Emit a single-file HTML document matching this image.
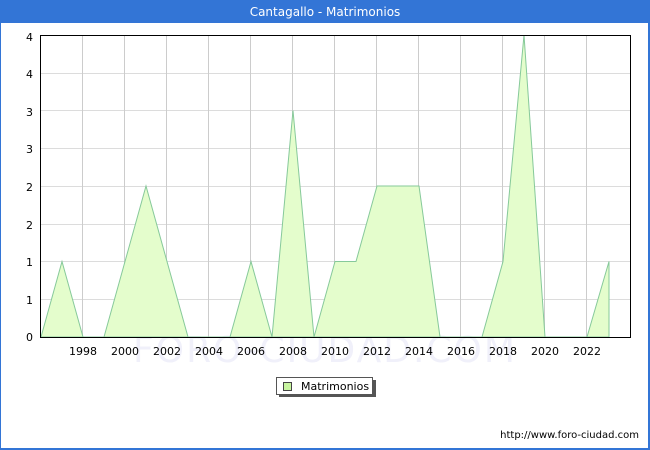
<!DOCTYPE html>
<html><head><meta charset="utf-8"><style>
body{margin:0;width:650px;height:450px;overflow:hidden;background:#fff;font-family:"DejaVu Sans","Liberation Sans",sans-serif}
</style></head><body>
<svg width="650" height="450" xmlns="http://www.w3.org/2000/svg" style="position:absolute;left:0;top:0">
<rect x="0" y="0" width="650" height="450" fill="#3375d6"/>
<rect x="1" y="23" width="647" height="425" fill="#fff"/>
<text x="325" y="16" fill="#fff" font-size="12" text-anchor="middle" font-family="DejaVu Sans,sans-serif">Cantagallo - Matrimonios</text>
<text x="325" y="362" fill="#f0f0fa" font-size="36" text-anchor="middle" font-family="DejaVu Sans,sans-serif" letter-spacing="2">FORO-CIUDAD.COM</text>
<g stroke="#dcdcdc" stroke-width="1">
<line x1="41" y1="73.5" x2="630" y2="73.5"/><line x1="41" y1="110.5" x2="630" y2="110.5"/>
<line x1="41" y1="148.5" x2="630" y2="148.5"/><line x1="41" y1="186.5" x2="630" y2="186.5"/>
<line x1="41" y1="224.5" x2="630" y2="224.5"/><line x1="41" y1="261.5" x2="630" y2="261.5"/>
<line x1="41" y1="299.5" x2="630" y2="299.5"/>
</g>
<g stroke="#cccccc" stroke-width="1">
<line x1="82.5" y1="35" x2="82.5" y2="337"/><line x1="124.5" y1="35" x2="124.5" y2="337"/>
<line x1="166.5" y1="35" x2="166.5" y2="337"/><line x1="208.5" y1="35" x2="208.5" y2="337"/>
<line x1="250.5" y1="35" x2="250.5" y2="337"/><line x1="292.5" y1="35" x2="292.5" y2="337"/>
<line x1="334.5" y1="35" x2="334.5" y2="337"/><line x1="376.5" y1="35" x2="376.5" y2="337"/>
<line x1="418.5" y1="35" x2="418.5" y2="337"/><line x1="460.5" y1="35" x2="460.5" y2="337"/>
<line x1="502.5" y1="35" x2="502.5" y2="337"/><line x1="544.5" y1="35" x2="544.5" y2="337"/>
<line x1="586.5" y1="35" x2="586.5" y2="337"/>
</g>
<polygon fill="#e4fdcc" stroke="#86c99a" stroke-width="1" points="41,337 62,261.5 83,337 104,337 125,261.5 146,186 167,261.5 188,337 209,337 230,337 251,261.5 272,337 293,110.5 314,337 335,261.5 356,261.5 377,186 398,186 419,186 440,337 461,337 482,337 503,261.5 524,35 545,337 566,337 587,337 609,261.5 609,337"/>
<rect x="40.5" y="35.5" width="590" height="302" fill="none" stroke="#000" stroke-width="1"/>
<g font-size="11" fill="#000" text-anchor="end" font-family="DejaVu Sans,sans-serif">
<text x="33" y="41">4</text><text x="33" y="78">4</text><text x="33" y="116">3</text>
<text x="33" y="153">3</text><text x="33" y="191">2</text><text x="33" y="229">2</text>
<text x="33" y="266">1</text><text x="33" y="304">1</text><text x="33" y="341">0</text>
</g>
<g font-size="11" fill="#000" text-anchor="middle" font-family="DejaVu Sans,sans-serif">
<text x="83" y="355">1998</text><text x="125" y="355">2000</text><text x="167" y="355">2002</text>
<text x="209" y="355">2004</text><text x="251" y="355">2006</text><text x="293" y="355">2008</text>
<text x="335" y="355">2010</text><text x="377" y="355">2012</text><text x="419" y="355">2014</text>
<text x="461" y="355">2016</text><text x="503" y="355">2018</text><text x="545" y="355">2020</text>
<text x="587" y="355">2022</text>
</g>
<rect x="279" y="380" width="97" height="17" fill="#555"/>
<rect x="276.5" y="377.5" width="96" height="17" fill="#fff" stroke="#555"/>
<rect x="283.5" y="382.5" width="8" height="8" fill="#c8f5a0" stroke="#444"/>
<text x="301" y="390" font-size="11" font-family="DejaVu Sans,sans-serif">Matrimonios</text>
<text x="639" y="438" font-size="10" text-anchor="end" font-family="DejaVu Sans,sans-serif">http://www.foro-ciudad.com</text>
</svg>
</body></html>
